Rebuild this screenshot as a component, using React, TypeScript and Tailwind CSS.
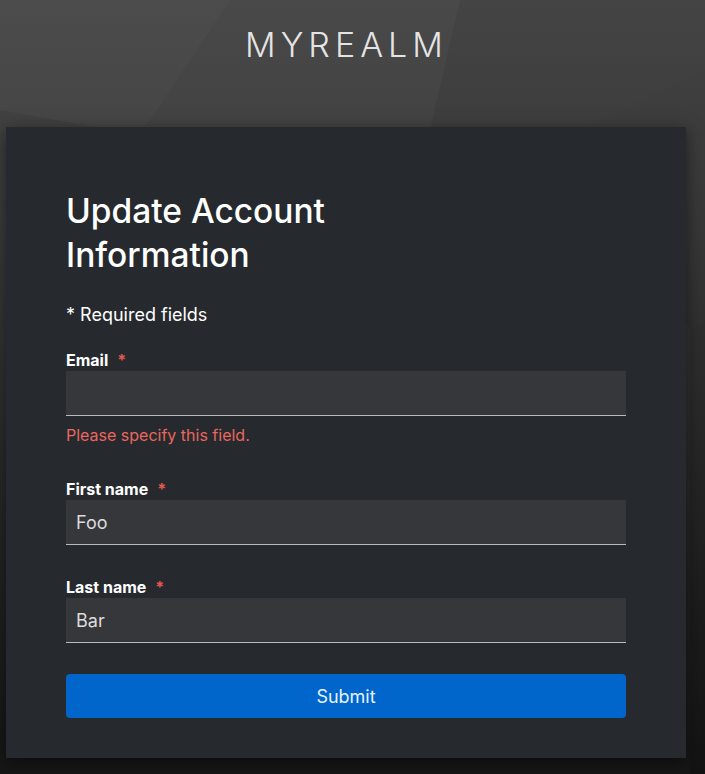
import { useState } from "react";

function Backdrop() {
  return (
    <svg
      className="absolute inset-0 h-full w-full"
      viewBox="0 0 705 774"
      preserveAspectRatio="none"
      aria-hidden="true"
    >
      <defs>
        <linearGradient id="bg" x1="0" y1="0" x2="0" y2="1">
          <stop offset="0" stopColor="#474747" />
          <stop offset="0.3" stopColor="#3b3b3b" />
          <stop offset="0.75" stopColor="#222222" />
          <stop offset="1" stopColor="#161616" />
        </linearGradient>
      </defs>
      <rect width="705" height="774" fill="url(#bg)" />
      <polygon points="0,0 230,0 140,135 0,110" fill="#ffffff" opacity="0.03" />
      <polygon points="230,0 460,0 430,130 140,135" fill="#ffffff" opacity="0.015" />
      <polygon points="460,0 705,0 705,70 580,130 430,130" fill="#000000" opacity="0.03" />
      <polygon points="580,130 705,70 705,320 690,330" fill="#000000" opacity="0.06" />
      <polygon points="690,330 705,320 705,774 690,774" fill="#000000" opacity="0.1" />
    </svg>
  );
}

function Field({
  label,
  value,
  error,
}: {
  label: string;
  value: string;
  error?: string;
}) {
  const [val, setVal] = useState(value);
  return (
    <div>
      <label className="flex text-[16px] leading-[21px] font-bold text-white">
        {label}
        <span className="ml-[9px] text-[#e8584f] font-bold">*</span>
      </label>
      <input
        value={val}
        onChange={(e) => setVal(e.target.value)}
        className="block h-[45px] w-full bg-[#36373b] border-b border-[#b8bbbe] px-[10px] text-[18px] text-[#dcdcdc] outline-none"
      />
      {error && (
        <p className="mt-[8px] text-[16px] leading-[22px] text-[#e9675e]">
          {error}
        </p>
      )}
    </div>
  );
}

export default function App() {
  return (
    <div
      className="relative min-h-[774px] w-full overflow-hidden"
      style={{ fontFamily: "Inter, 'Noto Sans', sans-serif" }}
    >
      <Backdrop />
      <div className="relative">
        <header className="pt-[28px] mb-[65px] pr-[12px] text-center">
          <h1 className="text-[34px] leading-[34px] font-light tracking-[5px] text-[#e4e4e4]">
            MYREALM
          </h1>
        </header>

        <main className="ml-[6px] w-[680px] bg-[#26292d] px-[60px] pt-[62px] pb-[40px] shadow-[0_4px_16px_rgba(0,0,0,0.5)]">
          <h2 className="max-w-[320px] text-[33.5px] leading-[44px] font-medium text-white">
            Update Account Information
          </h2>
          <p className="mt-[26px] text-[18px] leading-[24px] text-white">
            * Required fields
          </p>

          <form className="flex flex-col" onSubmit={(e) => e.preventDefault()}>
            <div className="mt-[23px]">
              <Field label="Email" value="" error="Please specify this field." />
            </div>
            <div className="mt-[33px]">
              <Field label="First name" value="Foo" />
            </div>
            <div className="mt-[32px]">
              <Field label="Last name" value="Bar" />
            </div>
            <button
              type="submit"
              className="mt-[31px] h-[44px] w-full rounded-[4px] bg-[#0066cc] text-[18px] text-[#e8f2ff]"
            >
              Submit
            </button>
          </form>
        </main>
      </div>
    </div>
  );
}
